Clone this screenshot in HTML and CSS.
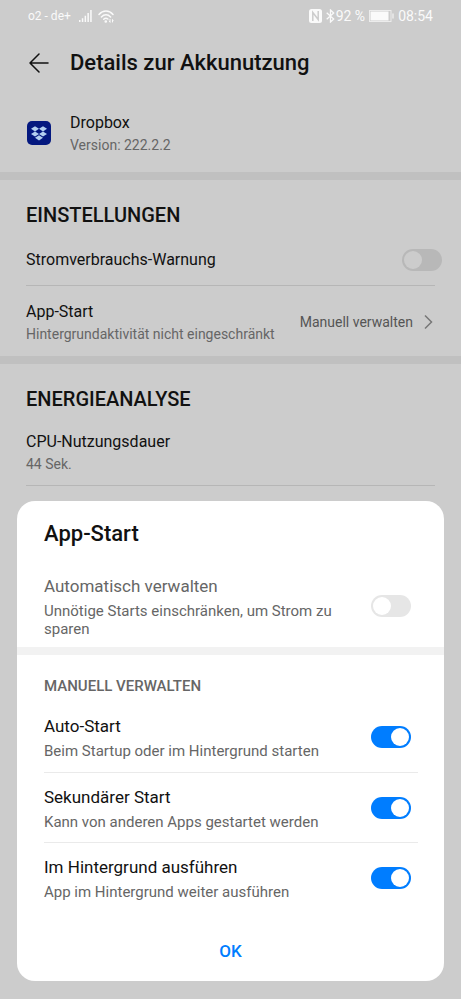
FILE: index.html
```html
<!DOCTYPE html>
<html lang="de">
<head>
<meta charset="utf-8">
<meta name="viewport" content="width=device-width, initial-scale=1">
<title>Details zur Akkunutzung</title>
<link rel="stylesheet" href="styles.css">
</head>
<body>
<div class="screen">
  <div class="status">
    <div class="status-left">
      <span class="carrier">o2 - de+</span>
      <svg width="13" height="12" viewBox="0 0 13 12" fill="currentColor" aria-hidden="true"><path d="M0 10h1.500v2H0zM2.800 8.300h1.500V12H2.800zM5.600 5.800h1.500V12H5.600zM8.400 3h1.500v9H8.400zM11.200 0h1.500v12h-1.500z"/></svg>
      <svg width="16" height="13" viewBox="0 0 16 13" fill="none" stroke="currentColor" stroke-width="1.500" stroke-linecap="round" aria-hidden="true"><path d="M1 4.400C5-.2 11-.2 15 4.400M3.400 7C6.200 4 9.800 4 12.600 7"/><path d="M5.700 9.300q2-2 4.200-.3"/><circle cx="7.800" cy="11.500" r=".6" fill="currentColor"/><path d="M12 9.500v2.500M11.300 11.200l.7.800M14.500 12v-2.500l.7.700" stroke-width="1"/></svg>
    </div>
    <div class="status-right">
      <svg width="13" height="14" viewBox="0 0 13 14" aria-hidden="true"><rect width="13" height="14" rx="2.500" fill="currentColor"/><path d="M3.800 12V3.500L9.200 10.500V2" fill="none" stroke="#ccc" stroke-width="1.500"/></svg>
      <svg class="bluetooth" width="9" height="14" viewBox="0 0 9 14" fill="none" stroke="currentColor" stroke-width="1.300" aria-hidden="true"><path d="M.7 3.700l7 6.300-3.200 3V1l3.200 3-7 6.300"/></svg>
      <span>92 %</span>
      <svg class="battery" width="25" height="12" viewBox="0 0 25 12" aria-hidden="true"><rect x=".5" y=".5" width="21.500" height="11" fill="none" stroke="currentColor" stroke-opacity=".7"/><path d="M1.500 1.500h18v9h-18zM23.500 3.500h1v5h-1z" fill="currentColor"/></svg>
      <span>08:54</span>
    </div>
  </div>

  <header class="header">
    <button class="back" type="button" aria-label="Zurück">
      <svg width="20" height="20" viewBox="0 0 20 20" fill="none" stroke="currentColor" stroke-width="1.500" stroke-linecap="round" stroke-linejoin="round" aria-hidden="true"><path d="M19 10H1M10 1L1 10l9 9"/></svg>
    </button>
    <h1>Details zur Akkunutzung</h1>
  </header>

  <section class="app">
    <svg width="24" height="24" viewBox="0 0 24 24" aria-hidden="true"><rect width="24" height="24" rx="5" fill="#04187f"/><path fill="#b3cff0" d="M8 5.200l4 2.600-4 2.600-4-2.600zM16 5.200l4 2.600-4 2.600-4-2.600zM8 10.400l4 2.600-4 2.600L4 13zM16 10.400l4 2.600-4 2.600-4-2.600zM12 14.200l4 2.600-4 2.600-4-2.600z"/></svg>
    <div>
      <p class="label">Dropbox</p>
      <p class="note">Version: 222.2.2</p>
    </div>
  </section>

  <section class="group">
    <h2>EINSTELLUNGEN</h2>
    <div class="row row-switch">
      <label class="label" for="warn">Stromverbrauchs-Warnung</label>
      <input class="switch switch-dim" type="checkbox" role="switch" id="warn">
    </div>
    <a class="row row-link" href="#app-start">
      <span>
        <span class="label">App-Start</span>
        <span class="note">Hintergrundaktivität nicht eingeschränkt</span>
      </span>
      <span class="value">Manuell verwalten
        <svg width="9" height="16" viewBox="0 0 9 16" fill="none" stroke="currentColor" stroke-width="1.500" aria-hidden="true"><path d="M1 1.500L7.500 8 1 14.500"/></svg>
      </span>
    </a>
  </section>

  <section class="group">
    <h2>ENERGIEANALYSE</h2>
    <div class="row row-cpu">
      <div>
        <p class="label">CPU-Nutzungsdauer</p>
        <p class="note">44 Sek.</p>
      </div>
    </div>
  </section>

  <div class="dialog" role="dialog" aria-labelledby="app-start">
    <h2 id="app-start">App-Start</h2>
    <div class="option option-auto">
      <label for="auto">
        <span class="label">Automatisch verwalten</span>
        <span class="note">Unnötige Starts einschränken, um Strom zu sparen</span>
      </label>
      <input class="switch" type="checkbox" role="switch" id="auto">
    </div>
    <div class="manual">
      <h3>MANUELL VERWALTEN</h3>
      <div class="option">
        <label for="start">
          <span class="label">Auto-Start</span>
          <span class="note">Beim Startup oder im Hintergrund starten</span>
        </label>
        <input class="switch" type="checkbox" role="switch" id="start" checked>
      </div>
      <div class="option">
        <label for="second">
          <span class="label">Sekundärer Start</span>
          <span class="note">Kann von anderen Apps gestartet werden</span>
        </label>
        <input class="switch" type="checkbox" role="switch" id="second" checked>
      </div>
      <div class="option">
        <label for="background">
          <span class="label">Im Hintergrund ausführen</span>
          <span class="note">App im Hintergrund weiter ausführen</span>
        </label>
        <input class="switch" type="checkbox" role="switch" id="background" checked>
      </div>
    </div>
    <button class="ok" type="button">OK</button>
  </div>
</div>
</body>
</html>
```
FILE: styles.css
```css
* {
  box-sizing: border-box;
}

body {
  margin: 0;
  background: #ccc;
  color: #111;
  font-family: Roboto, sans-serif;
}

h1, h2, h3, p {
  margin: 0;
}

h1, h2, h3 {
  font-weight: 500;
}

svg {
  display: block;
  flex: none;
}

.screen {
  position: relative;
  min-height: 100vh;
}

.status {
  display: flex;
  justify-content: space-between;
  height: 32px;
  padding: 0 28px;
  color: #fafafa;
  font-size: 14px;
}

.status-left, .status-right {
  display: flex;
  align-items: center;
}

.status-left {
  gap: 6px;
}

.carrier {
  margin-right: 2px;
  font-size: 12px;
}

.bluetooth {
  margin: 0 1px 0 4px;
}

.battery {
  margin: 0 4px;
}

.header {
  display: flex;
  align-items: center;
  gap: 21px;
  height: 62px;
  padding: 0 29px;
}

.back {
  padding: 0;
  border: 0;
  background: none;
  color: inherit;
}

h1 {
  font-size: 22px;
  line-height: 28px;
}

.app {
  display: flex;
  align-items: center;
  gap: 19px;
  height: 78px;
  padding: 0 26px 0 27px;
}

.label, .note {
  display: block;
}

.label {
  font-size: 16px;
  line-height: 24px;
}

.note {
  color: #666;
  font-size: 14px;
  line-height: 20px;
}

.group {
  padding-left: 26px;
  border-top: 8px solid #c0c0c0;
}

.group h2 {
  padding: 20px 0 6px;
  font-size: 20px;
  line-height: 30px;
}

.row {
  display: flex;
  align-items: center;
  justify-content: space-between;
  margin-right: 26px;
  color: inherit;
  text-decoration: none;
}

.row-switch {
  height: 50px;
  padding-bottom: 2px;
  border-bottom: 1px solid #b6b6b6;
}

.row-switch .switch {
  margin-right: -7px;
}

.row-link {
  height: 70px;
  padding-top: 2px;
}

.value {
  display: flex;
  align-items: center;
  gap: 11px;
  margin-right: 2px;
  color: #555;
  font-size: 14px;
}

.value svg {
  color: #777;
}

.row-cpu {
  height: 66px;
  padding-bottom: 2px;
  border-bottom: 1px solid #b6b6b6;
}

.switch {
  display: flex;
  flex: none;
  appearance: none;
  width: 40px;
  height: 22px;
  margin: 0;
  padding: 2px;
  border-radius: 11px;
  background: #e6e6e6;
}

.switch::before {
  content: "";
  width: 18px;
  height: 18px;
  border-radius: 50%;
  background: #fff;
}

.switch:checked {
  justify-content: flex-end;
  background: #007dff;
}

.switch-dim {
  background: #b8b8b8;
}

.switch-dim::before {
  background: #ccc;
}

.dialog {
  position: absolute;
  right: 17px;
  bottom: 18px;
  left: 17px;
  border-radius: 18px;
  background: #fff;
}

.dialog > h2 {
  padding: 18px 27px 0;
  font-size: 22px;
  line-height: 30px;
}

.option {
  display: flex;
  align-items: center;
  justify-content: space-between;
  height: 70px;
  padding-right: 7px;
}

.option label {
  flex: 1;
  max-width: 310px;
}

.option .label {
  font-size: 17px;
  line-height: 28px;
}

.option .note {
  padding: 2px 0;
  font-size: 15px;
  line-height: 18px;
}

.option + .option {
  border-top: 1px solid #eaeaea;
}

.option-auto {
  height: 98px;
  padding: 16px 33px 0 27px;
}

.option-auto .label {
  color: #666;
}

.manual {
  padding: 16px 26px 0 27px;
  border-top: 8px solid #f2f2f2;
}

h3 {
  color: #666;
  font-size: 15px;
  line-height: 31px;
}

.ok {
  display: block;
  margin: 20px auto 11px;
  padding: 0 24px;
  border: 0;
  background: none;
  color: #007dff;
  font: 500 17px/38px Roboto, sans-serif;
}
```
